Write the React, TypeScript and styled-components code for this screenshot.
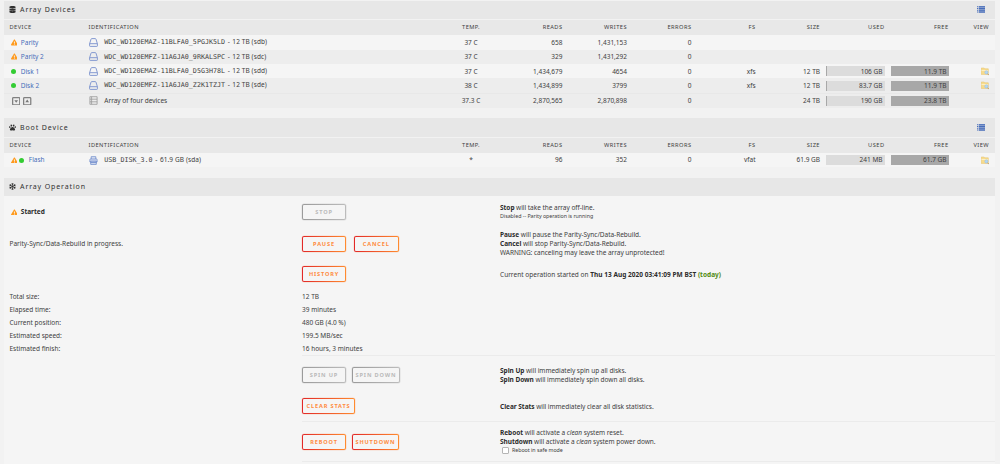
import React from 'react';
import styled, { createGlobalStyle } from 'styled-components';
import { FaDatabase, FaPaw, FaRegSnowflake, FaExclamationTriangle } from 'react-icons/fa';

interface IAlignProps {
  $align?: string;
}
interface IDevice {
  name: string;
  status: 'warn' | 'ok' | 'both';
  serial: string;
  info: string;
  temp: string;
  reads: string;
  writes: string;
  errors: string;
  fs?: string;
  size?: string;
  used?: string;
  usedLevel?: number;
  free?: string;
  flash?: boolean;
}

const GlobalStyle = createGlobalStyle`
  * {
    box-sizing: border-box;
  }
  body {
    margin: 0;
    background: #f2f2f2;
    color: #404040;
    font-family: 'Noto Sans', sans-serif;
    font-size: 6.5px;
    line-height: 9.2px;
  }
  b,
  strong {
    color: #2c2c2c;
  }
`;
const Page = styled.main`
  width: 1000px;
  height: 464px;
  overflow: hidden;
  padding: 0.7px 5.5px 0 3.5px;
  display: flex;
  flex-direction: column;
`;
const TitleBar = styled.header`
  height: 18.6px;
  flex: none;
  display: flex;
  align-items: center;
  padding: 0 9.5px 1px 5px;
  background: #e7e7e7;
  color: #303030;
`;
const Title = styled.h2`
  margin: 0 auto 0 4.6px;
  font-size: 7px;
  font-weight: 400;
  letter-spacing: 0.87px;
`;
const Table = styled.section<{ $gap: number }>`
  flex: none;
  margin-bottom: ${(props) => props.$gap}px;
`;
const Row = styled.div<{ $shade?: string }>`
  display: grid;
  grid-template-columns: 85px 345.5px 74px 54.5px 64.5px 64.5px 64px 64.5px 64.5px 64px 40.5px;
  align-items: center;
  height: 14.4px;
  background: ${(props) => props.$shade || '#f5f5f5'};
`;
const HeadRow = styled(Row)`
  height: 15.3px;
  margin-top: 0.6px;
  background: #e8e8e8;
  font-size: 5.7px;
  letter-spacing: 0.45px;
`;
const TotalRow = styled(Row)`
  height: 15px;
  border-top: 1px solid #e8e8e8;
  background: #ededed;
`;
const Cell = styled.div<IAlignProps>`
  text-align: ${(props) => props.$align || 'right'};
  white-space: nowrap;
`;
const HeadDevice = styled(Cell)`
  padding-left: 6px;
`;
const DeviceCell = styled.div`
  display: flex;
  align-items: center;
  padding-left: 7px;
`;
const DeviceName = styled.a`
  margin-left: 3.5px;
  color: #486dba;
`;
const StatusDot = styled.i<{ $shift: number }>`
  width: 5px;
  height: 5px;
  margin: 0 1px 0 ${(props) => props.$shift}px;
  border-radius: 50%;
  background: #33cc33;
`;
const IdentCell = styled.div`
  display: flex;
  align-items: center;
  white-space: pre;
`;
const IdentText = styled.span`
  margin-left: 6.8px;
`;
const Serial = styled.span`
  font-family: 'DejaVu Sans Mono', monospace;
  font-size: 6.7px;
`;
const Separator = styled.span`
  margin: 0 0.9px;
`;
const Info = styled.span`
  letter-spacing: 0.1px;
`;
const Meter = styled.div<{ $full?: boolean }>`
  display: flex;
  align-items: center;
  justify-content: flex-end;
  height: 10px;
  margin-left: 6px;
  padding-right: 2px;
  background: ${(props) => (props.$full ? '#a8a8a8' : '#dcdcdc')};
`;
const UsedMeter = styled(Meter)<{ $level: number }>`
  border-left: ${(props) => props.$level}px solid #a8a8a8;
`;
const ViewCell = styled.div`
  display: flex;
  justify-content: flex-end;
`;
const ArrowBox = styled.span`
  display: flex;
  margin: 0 3.5px 0 1px;
`;
const Operations = styled.section`
  flex: 1;
  background: #f5f5f5;
`;
const OpRow = styled.div<{ $height: number }>`
  display: grid;
  grid-template-columns: 298.5px 198px 1fr;
  align-items: center;
  height: ${(props) => props.$height}px;
`;
const OpLabel = styled.div`
  display: flex;
  align-items: center;
  padding-left: 6px;
`;
const StartedLabel = styled(OpLabel)`
  padding-left: 7px;
`;
const Started = styled.strong`
  margin-left: 3.5px;
`;
const Buttons = styled.div<{ $gap?: number }>`
  display: flex;
  gap: ${(props) => props.$gap || 5.5}px;
`;
const Button = styled.button<{ $width: number }>`
  width: ${(props) => props.$width}px;
  height: 16px;
  padding: 0;
  border: 1px solid transparent;
  border-radius: 2px;
  background: linear-gradient(#f5f5f5, #f5f5f5) padding-box,
    linear-gradient(90deg, #e22828, #ff8c2f) border-box;
  box-shadow: 0 0 0 0.5px rgba(255, 130, 70, 0.25);
  color: #ff8c3f;
  font: 700 5.6px/14px 'Noto Sans', sans-serif;
  letter-spacing: 0.85px;
  white-space: nowrap;
  &:disabled {
    background: linear-gradient(#f5f5f5, #f5f5f5) padding-box,
      linear-gradient(90deg, #9a9a9a, #bcbcbc) border-box;
    box-shadow: 0 0 0 0.5px rgba(150, 150, 150, 0.25);
    color: #bababa;
  }
`;
const Help = styled.div`
  white-space: nowrap;
  letter-spacing: -0.03px;
`;
const StartTime = styled.span`
  letter-spacing: 0.02px;
`;
const Small = styled.div`
  font-size: 5.3px;
`;
const SafeMode = styled(Small)`
  display: flex;
  align-items: center;
  gap: 3px;
  padding-left: 2px;
`;
const CheckBox = styled.span`
  width: 7px;
  height: 7px;
  border: 1px solid #b5b5b5;
  border-radius: 1px;
  background: #fff;
`;
const Today = styled.strong`
  color: #4f8a10;
`;
const Divider = styled.hr`
  height: 1px;
  margin: 0 0 0 298px;
  border: 0;
  background: #ebebeb;
`;

const WarnIcon = () => <FaExclamationTriangle size={6.8} color="#ff9a1c" />;
const ListIcon = () => (
  <svg width="8" height="7" viewBox="0 0 8 7" fill="#486dba">
    <path d="M0 .2h1v1H0zM0 2h1v1H0zM0 3.8h1v1H0zM0 5.6h1v1H0zM1.7.2H8v1H1.7zM1.7 2H8v1H1.7zM1.7 3.8H8v1H1.7zM1.7 5.6H8v1H1.7z" />
    <path d="M1.7 0H8v7H1.7z" opacity=".5" />
  </svg>
);
const DiskIcon = () => (
  <svg width="9" height="9" viewBox="0 0 9 9" fill="none" stroke="#7890cd" strokeWidth="0.9">
    <path d="M.6 5.7 2 1.2Q2.2.6 2.8.6h3.4q.6 0 .8.6l1.4 4.5v2.1q0 .6-.6.6H1.2q-.6 0-.6-.6zM.6 5.7h7.8" />
  </svg>
);
const FlashIcon = () => (
  <svg width="9" height="9" viewBox="0 0 9 9" fill="#dfe5f3" stroke="#6f8bcb" strokeWidth="0.8">
    <path d="M2.2 3V.7h4.6V3M1.4 3h6.2q.5 0 .5.5V6H.9V3.5q0-.5.5-.5zM1.7 5h5.6v3.4H1.7zM1.7 6.6h5.6" />
  </svg>
);
const TotalIcon = () => (
  <svg width="9" height="9" viewBox="0 0 9 9" fill="none" stroke="#999" strokeWidth="0.8">
    <path d="M.9.7h7.2v7.6H.9zM.9 3.2h7.2M.9 5.8h7.2M2.6.7v7.6" />
  </svg>
);
const ArrowIcon = ({ up }: { up?: boolean }) => (
  <svg width="8.4" height="8.4" viewBox="0 0 8 8">
    <rect x=".6" y=".6" width="6.8" height="6.8" rx=".8" fill="none" stroke="#808080" strokeWidth="1.2" />
    <path d={up ? 'M4 2.4 5.8 5H2.2z' : 'M4 5.6 2.2 3h3.6z'} fill="#777" />
  </svg>
);
const FolderIcon = () => (
  <svg width="8.5" height="9" viewBox="0.5 0 8.5 9">
    <path d="M.7 1h3l.7.8h3.4v5.6H.7z" fill="#f7dc8e" stroke="#e6c068" strokeWidth="0.5" />
    <path d="M1 3.2h6.4v.8H1z" fill="#fdf3d2" />
    <circle cx="5.9" cy="5.4" r="1.6" fill="#b4d6f5" stroke="#98c1e6" strokeWidth="0.6" />
    <path d="m7.2 6.8 1.3 1.5" stroke="#b08b5a" strokeWidth="0.8" />
  </svg>
);

const arrayDevices: IDevice[] = [
  { name: 'Parity', status: 'warn', serial: 'WDC_WD120EMAZ-11BLFA0_5PGJK5LD', info: '12 TB (sdb)', temp: '37 C', reads: '658', writes: '1,431,153', errors: '0' },
  { name: 'Parity 2', status: 'warn', serial: 'WDC_WD120EMFZ-11A6JA0_9RKALSPC', info: '12 TB (sdc)', temp: '37 C', reads: '329', writes: '1,431,292', errors: '0' },
  { name: 'Disk 1', status: 'ok', serial: 'WDC_WD120EMAZ-11BLFA0_D5G3H78L', info: '12 TB (sdd)', temp: '37 C', reads: '1,434,679', writes: '4654', errors: '0', fs: 'xfs', size: '12 TB', used: '106 GB', usedLevel: 1, free: '11.9 TB' },
  { name: 'Disk 2', status: 'ok', serial: 'WDC_WD120EMFZ-11A6JA0_Z2K1TZJT', info: '12 TB (sde)', temp: '38 C', reads: '1,434,899', writes: '3799', errors: '0', fs: 'xfs', size: '12 TB', used: '83.7 GB', usedLevel: 1, free: '11.9 TB' },
];
const bootDevice: IDevice = {
  name: 'Flash', status: 'both', serial: 'USB_DISK_3.0', info: '61.9 GB (sda)', temp: '*', reads: '96', writes: '352', errors: '0', fs: 'vfat', size: '61.9 GB', used: '241 MB', usedLevel: 0, free: '61.7 GB', flash: true,
};
const progress = [
  ['Total size:', '12 TB'],
  ['Elapsed time:', '39 minutes'],
  ['Current position:', '480 GB (4.0 %)'],
  ['Estimated speed:', '199.5 MB/sec'],
  ['Estimated finish:', '16 hours, 3 minutes'],
];

const Headings = () => (
  <HeadRow>
    <HeadDevice $align="left">DEVICE</HeadDevice>
    <Cell $align="left">IDENTIFICATION</Cell>
    <Cell $align="center">TEMP.</Cell>
    {['READS', 'WRITES', 'ERRORS', 'FS', 'SIZE', 'USED', 'FREE', 'VIEW'].map((label) => (
      <Cell key={label}>{label}</Cell>
    ))}
  </HeadRow>
);

const DeviceRow: React.FC<{ device: IDevice; shade?: string }> = ({ device, shade }) => (
  <Row $shade={shade}>
    <DeviceCell>
      {device.status !== 'ok' && <WarnIcon />}
      {device.status !== 'warn' && <StatusDot $shift={device.status === 'both' ? 2 : 0.7} />}
      <DeviceName>{device.name}</DeviceName>
    </DeviceCell>
    <IdentCell>
      {device.flash ? <FlashIcon /> : <DiskIcon />}
      <IdentText>
        <Serial>{device.serial}</Serial>
        <Separator> - </Separator>
        <Info>{device.info}</Info>
      </IdentText>
    </IdentCell>
    <Cell $align="center">{device.temp}</Cell>
    <Cell>{device.reads}</Cell>
    <Cell>{device.writes}</Cell>
    <Cell>{device.errors}</Cell>
    <Cell>{device.fs}</Cell>
    <Cell>{device.size}</Cell>
    {device.used ? <UsedMeter $level={device.usedLevel || 0}>{device.used}</UsedMeter> : <Cell />}
    {device.free ? <Meter $full>{device.free}</Meter> : <Cell />}
    <ViewCell>{device.free && <FolderIcon />}</ViewCell>
  </Row>
);

const App: React.FC = () => (
  <>
    <GlobalStyle />
    <Page>
      <Table $gap={10.6}>
        <TitleBar>
          <FaDatabase size={7} />
          <Title>Array Devices</Title>
          <ListIcon />
        </TitleBar>
        <Headings />
        {arrayDevices.map((device, index) => (
          <DeviceRow key={device.name} device={device} shade={index % 2 ? '#ededed' : '#f5f5f5'} />
        ))}
        <TotalRow>
          <DeviceCell>
            <ArrowBox>
              <ArrowIcon />
            </ArrowBox>
            <ArrowIcon up />
          </DeviceCell>
          <IdentCell>
            <TotalIcon />
            <IdentText>Array of four devices</IdentText>
          </IdentCell>
          <Cell $align="center">37.3 C</Cell>
          <Cell>2,870,565</Cell>
          <Cell>2,870,898</Cell>
          <Cell>0</Cell>
          <Cell />
          <Cell>24 TB</Cell>
          <UsedMeter $level={1}>190 GB</UsedMeter>
          <Meter $full>23.8 TB</Meter>
        </TotalRow>
      </Table>
      <Table $gap={10.3}>
        <TitleBar>
          <FaPaw size={7} />
          <Title>Boot Device</Title>
          <ListIcon />
        </TitleBar>
        <Headings />
        <DeviceRow device={bootDevice} />
      </Table>
      <TitleBar>
        <FaRegSnowflake size={7} />
        <Title>Array Operation</Title>
      </TitleBar>
      <Operations>
        <OpRow $height={32}>
          <StartedLabel>
            <WarnIcon />
            <Started>Started</Started>
          </StartedLabel>
          <Buttons>
            <Button $width={44} disabled>STOP</Button>
          </Buttons>
          <Help>
            <b>Stop</b> will take the array off-line.
            <Small>Disabled -- Parity operation is running</Small>
          </Help>
        </OpRow>
        <OpRow $height={30.9}>
          <OpLabel>Parity-Sync/Data-Rebuild in progress.</OpLabel>
          <Buttons $gap={8}>
            <Button $width={44}>PAUSE</Button>
            <Button $width={44.5}>CANCEL</Button>
          </Buttons>
          <Help>
            <b>Pause</b> will pause the Parity-Sync/Data-Rebuild.
            <br />
            <b>Cancel</b> will stop Parity-Sync/Data-Rebuild.
            <br />
            WARNING: canceling may leave the array unprotected!
          </Help>
        </OpRow>
        <OpRow $height={30.9}>
          <span />
          <Buttons>
            <Button $width={44}>HISTORY</Button>
          </Buttons>
          <Help>
            <StartTime>
              Current operation started on <b>Thu 13 Aug 2020 03:41:09 PM BST</b> <Today>(today)</Today>
            </StartTime>
          </Help>
        </OpRow>
        {progress.map(([label, value]) => (
          <OpRow key={label} $height={13.05}>
            <OpLabel>{label}</OpLabel>
            <span>{value}</span>
          </OpRow>
        ))}
        <Divider />
        <OpRow $height={38}>
          <span />
          <Buttons $gap={6}>
            <Button $width={44} disabled>SPIN UP</Button>
            <Button $width={48} disabled>SPIN DOWN</Button>
          </Buttons>
          <Help>
            <b>Spin Up</b> will immediately spin up all disks.
            <br />
            <b>Spin Down</b> will immediately spin down all disks.
          </Help>
        </OpRow>
        <OpRow $height={24}>
          <span />
          <Buttons>
            <Button $width={53}>CLEAR STATS</Button>
          </Buttons>
          <Help>
            <b>Clear Stats</b> will immediately clear all disk statistics.
          </Help>
        </OpRow>
        <OpRow $height={2.8} />
        <Divider />
        <OpRow $height={39.5}>
          <span />
          <Buttons $gap={6}>
            <Button $width={44}>REBOOT</Button>
            <Button $width={47}>SHUTDOWN</Button>
          </Buttons>
          <Help>
            <b>Reboot</b> will activate a <em>clean</em> system reset.
            <br />
            <b>Shutdown</b> will activate a <em>clean</em> system power down.
            <SafeMode>
              <CheckBox />
              Reboot in safe mode
            </SafeMode>
          </Help>
        </OpRow>
        <Divider />
      </Operations>
    </Page>
  </>
);

export default App;
